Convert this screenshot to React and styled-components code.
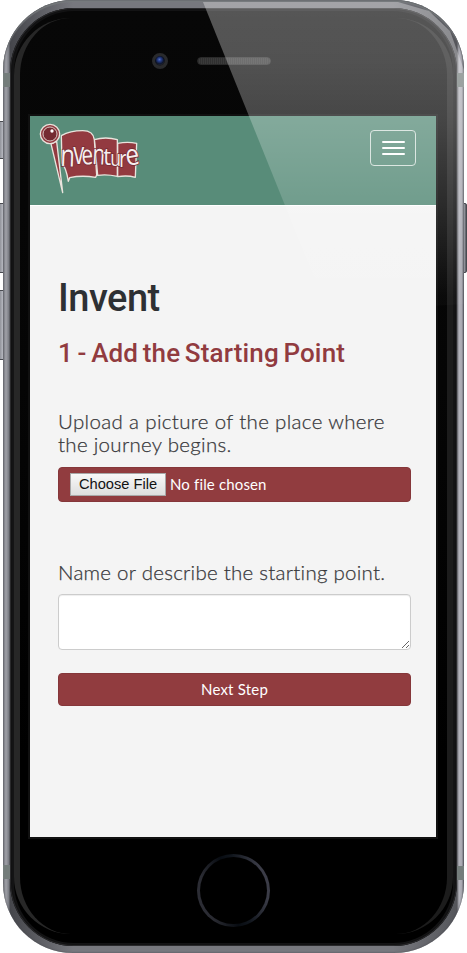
import React from 'react';
import styled, { createGlobalStyle } from 'styled-components';

const GlobalStyle = createGlobalStyle`
  *, *::before, *::after { box-sizing: border-box; }
  body { margin: 0; background: #fff; overflow: hidden; }
`;

const Device = styled.main`
  position: relative;
  width: 467px;
  height: 953px;
  padding: 0 3px;
  overflow: hidden;
  background: #fff;
`;

const SideButton = styled.div`
  position: absolute;
  top: ${(p) => p.$top}px;
  ${(p) => (p.$right ? 'right: 0;' : 'left: -2px;')}
  width: 8px;
  height: ${(p) => p.$height}px;
  border: 1px solid #484a50;
  border-radius: 2px;
  background: linear-gradient(90deg, #85878e, #b2b4bc 60%, #55575d);
`;

const Shell = styled.div`
  position: relative;
  height: 953px;
  padding: 8px 7px 7px;
  border-radius: 70px;
  background: linear-gradient(90deg, #74767c 0, #a0a1a8 3px, #777980 6px, #45464b 7px, #77787e 70px, #77787e 390px, #55565b 454px, #b4b4bc 456px, #a8a8b0 459px, #55565c 461px);
  box-shadow: inset 0 0 2px #45464c, inset 0 2px 1px #7b7f81;
`;

const Antenna = styled.div`
  position: absolute;
  top: ${(p) => p.$top}px;
  ${(p) => (p.$right ? 'right: 0;' : 'left: 0;')}
  width: 7px;
  height: 14px;
  background: #747d7b;
`;

const Rim = styled.div`
  height: 938px;
  padding: 3px 4px;
  border-radius: 64px;
  background: #141415;
  box-shadow: inset 0 0 0 1px #29292b, inset 0 0 3px #000;
`;

const Glass = styled.div`
  position: relative;
  display: flex;
  flex-direction: column;
  align-items: center;
  height: 932px;
  padding-right: 1px;
  border-radius: 60px;
  background: linear-gradient(#070707, #050505 40%, #000 80%);

  &::before {
    content: '';
    position: absolute;
    inset: 7px 0 9px;
    border-left: 6px solid #272727;
    border-right: 6px solid #1c1c1c;
    border-radius: 57px;
    pointer-events: none;
  }
`;

const TopBezel = styled.div`
  display: flex;
  align-items: center;
  width: 406px;
  height: 105px;
  padding: 0 0 5px 122px;
  gap: 29px;
`;

const Camera = styled.div`
  width: 16px;
  height: 16px;
  border: 3px solid #292a2c;
  border-radius: 50%;
  background: radial-gradient(circle at 45% 35%, #5570b8 0, #253e8d 20%, #101830 50%, #333 75%);
  box-shadow: inset 0 0 2px #000;
`;

const Speaker = styled.div`
  width: 74px;
  height: 8px;
  border: 1px solid #292929;
  border-radius: 4px;
  background: repeating-linear-gradient(90deg, #303030 0 1px, #3a3a3a 1px 2px);
`;

const Screen = styled.section`
  display: flex;
  flex-direction: column;
  width: 406px;
  height: 721px;
  background: #f4f4f4;
  box-shadow: 0 0 0 2px #101010;
`;

const Navbar = styled.header`
  display: flex;
  justify-content: space-between;
  align-items: flex-start;
  height: 90px;
  padding: 6px 20px 0 6px;
  border-bottom: 1px solid #fff;
  background: #588c79;
`;

const MenuButton = styled.button`
  display: flex;
  flex-direction: column;
  align-items: center;
  justify-content: center;
  gap: 4px;
  width: 46px;
  height: 36px;
  margin-top: 8px;
  padding: 0;
  border: 1px solid #d2e0da;
  border-radius: 4px;
  background: transparent;
`;

const MenuLine = styled.span`
  width: 23px;
  height: 2px;
  border-radius: 1px;
  background: #fff;
`;

const Content = styled.div`
  display: flex;
  flex-direction: column;
  padding: 69px 25px 0 28px;
`;

const Title = styled.h1`
  height: 46px;
  margin: 0;
  color: #2e3033;
  font: 500 38px/46px Roboto, sans-serif;
  letter-spacing: -0.5px;
  white-space: nowrap;
`;

const Subtitle = styled.h2`
  height: 34px;
  margin: 15px 0 0;
  color: #913b3f;
  font: 500 26px/34px Roboto, sans-serif;
  letter-spacing: 0.15px;
  word-spacing: -2px;
  white-space: nowrap;
`;

const Label = styled.label`
  margin-top: ${(p) => p.$gap}px;
  color: #38383b;
  font: 300 20.5px/23px Lato, sans-serif;
  -webkit-text-stroke: 0.25px #38383b;
  white-space: nowrap;
`;

const LabelLine = styled.span`
  display: block;
  letter-spacing: ${(p) => p.$spacing}px;
`;

const FileField = styled.div`
  display: flex;
  align-items: center;
  gap: 4px;
  height: 35px;
  margin-top: 11px;
  padding: 0 11px 1px;
  border: 1px solid #85373a;
  border-radius: 4px;
  background: #913c3f;
  color: #fff;
  font: 400 15px/20px Lato, sans-serif;
`;

const FileStatus = styled.span`
  margin-top: -1px;
  letter-spacing: 0.15px;
`;

const ChooseButton = styled.button`
  width: 96px;
  height: 23px;
  padding: 0;
  border: 1px solid #a8a8a8;
  background: linear-gradient(#f8f8f8, #dedede);
  color: #111;
  font: 400 14.67px/20px 'Liberation Sans', Arial, sans-serif;
`;

const TextArea = styled.textarea`
  display: block;
  width: 353px;
  height: 56px;
  margin-top: 10px;
  border: 1px solid #ccc;
  border-radius: 4px;
  background: #fff;
  resize: vertical;
  box-shadow: inset 0 1px 1px #eee;
`;

const NextButton = styled.button`
  height: 33px;
  margin-top: 23px;
  padding: 0 0 1px;
  border: 1px solid #85373a;
  border-radius: 4px;
  background: #913c3f;
  color: #fff;
  font: 400 15px/20px Lato, sans-serif;
  letter-spacing: 0.2px;
`;

const HomeButton = styled.div`
  width: 73px;
  height: 73px;
  margin-top: 17px;
  padding: 3px;
  border-radius: 50%;
  background: linear-gradient(75deg, #30313a 0, #292a31 20%, #080c12 45%, #10151c 58%, #3b3c47 85%);

  &::after {
    content: '';
    display: block;
    height: 67px;
    border-radius: 50%;
    background: #000;
  }
`;

const Glare = styled.div`
  position: absolute;
  inset: 2px 3px auto 0;
  height: 312px;
  clip-path: polygon(203px 0, 398px 0, 429px 9px, 450px 29px, 464px 68px, 464px 302px, 328px 310px);
  background: linear-gradient(rgba(255,255,255,.32) 0, rgba(255,255,255,.3) 60px, rgba(255,255,255,.26) 115px, rgba(255,255,255,.15) 202px, rgba(255,255,255,.02) 295px);
  pointer-events: none;
`;

const Letter = ({ x, y, size, stretch, angle = 0, children }) => (
  <text fontSize={size} transform={`translate(${x} ${y}) rotate(${angle}) scale(${stretch} 1)`}>{children}</text>
);

const Logo = () => (
  <svg width="108" height="76" viewBox="18 24 324 228" aria-label="Inventure">
    <g fill="#933a40" stroke="#e9e4dd" strokeWidth="4" strokeLinejoin="round">
      <path d="M263 88Q293 82 320 88L316 190Q292 183 263 188Z" />
      <path d="M193 77Q227 67 262 77L262 187Q230 180 203 184Z" />
      <path d="M94 65Q120 50 158 50Q190 50 193 77L200 183L197 190Q155 183 119 191L115 202Q108 160 96 148Z" />
      <path d="M62 85L80 83L98 236Z" />
      <circle cx="60" cy="60" r="29" />
      <circle cx="60" cy="60" r="21" fill="#752b31" strokeWidth="2.5" />
    </g>
    <circle cx="66" cy="51" r="5" fill="#fff" />
    <g fill="#f6eeee" stroke="#752c34" strokeWidth="5" paintOrder="stroke" fontFamily="Open Sans, sans-serif" fontWeight="500">
      <Letter x="90" y="156" size="92" stretch=".78" angle={2}>n</Letter>
      <Letter x="130" y="149" size="94" stretch=".7">v</Letter>
      <Letter x="156" y="152" size="82" stretch=".76" angle={-4}>e</Letter>
      <Letter x="186" y="150" size="86" stretch=".72" angle={3}>n</Letter>
      <Letter x="220" y="154" size="70" stretch=".95">t</Letter>
      <Letter x="241" y="156" size="66" stretch=".8">u</Letter>
      <Letter x="267" y="158" size="70" stretch=".85">r</Letter>
      <Letter x="291" y="156" size="88" stretch=".84" angle={-10}>e</Letter>
    </g>
  </svg>
);

export default function App() {
  return (
    <>
      <GlobalStyle />
      <Device>
        <SideButton $top={121} $height={38} />
        <SideButton $top={203} $height={70} />
        <SideButton $top={290} $height={70} />
        <SideButton $top={203} $height={70} $right />
        <Shell>
          <Antenna $top={73} />
          <Antenna $top={73} $right />
          <Antenna $top={865} />
          <Antenna $top={866} $right />
          <Rim>
            <Glass>
              <TopBezel><Camera /><Speaker /></TopBezel>
              <Screen>
                <Navbar>
                  <Logo />
                  <MenuButton aria-label="Menu"><MenuLine /><MenuLine /><MenuLine /></MenuButton>
                </Navbar>
                <Content>
                  <Title>Invent</Title>
                  <Subtitle>1 - Add the Starting Point</Subtitle>
                  <Label $gap={40}>
                    <LabelLine $spacing={0.34}>Upload a picture of the place where</LabelLine>
                    <LabelLine $spacing={0.3}>the journey begins.</LabelLine>
                  </Label>
                  <FileField><ChooseButton>Choose File</ChooseButton><FileStatus>No file chosen</FileStatus></FileField>
                  <Label $gap={59} htmlFor="description">
                    <LabelLine $spacing={0.26}>Name or describe the starting point.</LabelLine>
                  </Label>
                  <TextArea id="description" />
                  <NextButton>Next Step</NextButton>
                </Content>
              </Screen>
              <HomeButton />
            </Glass>
          </Rim>
        </Shell>
        <Glare />
      </Device>
    </>
  );
}
